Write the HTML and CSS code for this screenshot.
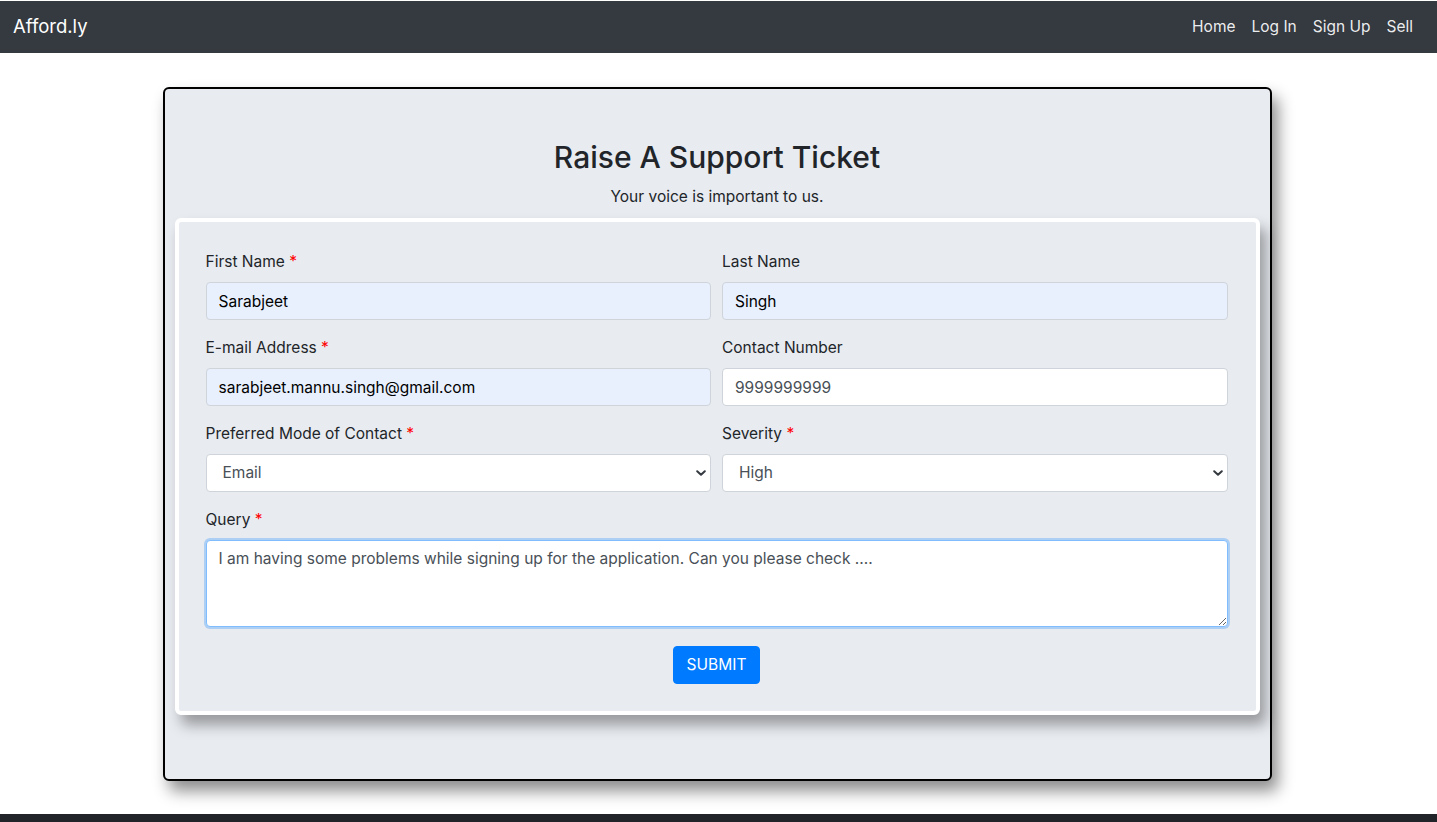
FILE: index.html
```html
<!DOCTYPE html>
<html lang="en">
<head>
<meta charset="utf-8">
<title>Afford.ly - Support</title>
<link rel="stylesheet" href="styles.css">
</head>
<body>
<nav class="navbar">
  <a class="brand" href="#">Afford.ly</a>
  <ul class="nav-links">
    <li><a href="#">Home</a></li>
    <li><a href="#">Log In</a></li>
    <li><a href="#">Sign Up</a></li>
    <li><a href="#">Sell</a></li>
  </ul>
</nav>
<main class="page">
  <section class="outer-card">
    <h2 class="title">Raise A Support Ticket</h2>
    <p class="subtitle">Your voice is important to us.</p>
    <form class="inner-card">
      <div class="form-row">
        <div class="form-group">
          <label>First Name <span class="req">*</span></label>
          <input class="form-control autofill" type="text" value="Sarabjeet">
        </div>
        <div class="form-group">
          <label>Last Name</label>
          <input class="form-control autofill" type="text" value="Singh">
        </div>
      </div>
      <div class="form-row">
        <div class="form-group">
          <label>E-mail Address <span class="req">*</span></label>
          <input class="form-control autofill" type="email" value="sarabjeet.mannu.singh@gmail.com">
        </div>
        <div class="form-group">
          <label>Contact Number</label>
          <input class="form-control muted" type="text" value="9999999999">
        </div>
      </div>
      <div class="form-row">
        <div class="form-group">
          <label>Preferred Mode of Contact <span class="req">*</span></label>
          <div class="select-wrap">
            <select class="form-control muted">
              <option>Email</option>
              <option>Phone</option>
            </select>
            <svg class="chev" width="10" height="8" viewBox="0 0 10 8"><path d="M1.2 2.2 L5 5.8 L8.8 2.2" fill="none" stroke="#343a40" stroke-width="2" stroke-linecap="round" stroke-linejoin="round"/></svg>
          </div>
        </div>
        <div class="form-group">
          <label>Severity <span class="req">*</span></label>
          <div class="select-wrap">
            <select class="form-control muted">
              <option>High</option>
              <option>Medium</option>
              <option>Low</option>
            </select>
            <svg class="chev" width="10" height="8" viewBox="0 0 10 8"><path d="M1.2 2.2 L5 5.8 L8.8 2.2" fill="none" stroke="#343a40" stroke-width="2" stroke-linecap="round" stroke-linejoin="round"/></svg>
          </div>
        </div>
      </div>
      <div class="form-group full">
        <label>Query <span class="req">*</span></label>
        <textarea class="form-control muted focused" rows="3">I am having some problems while signing up for the application. Can you please check ....</textarea>
      </div>
      <div class="actions">
        <button type="button" class="btn">SUBMIT</button>
      </div>
    </form>
  </section>
</main>
<footer class="footer"></footer>
</body>
</html>
```

FILE: styles.css
```css
* { box-sizing: border-box; }
html, body { margin: 0; padding: 0; }
body {
  font-family: Inter, "Noto Sans", "Liberation Sans", sans-serif;
  font-size: 16px;
  line-height: 1.5;
  color: #212529;
  background: #fff;
  min-height: 822px;
  display: flex;
  flex-direction: column;
}
.navbar {
  margin-top: 1px;
  height: 52px;
  background: #343a40;
  display: flex;
  align-items: center;
  justify-content: space-between;
  padding: 0 16px 0 13px;
}
.brand {
  color: #fff;
  font-size: 18.5px;
  text-decoration: none;
}
.nav-links {
  list-style: none;
  margin: 0;
  padding: 0;
  display: flex;
}
.nav-links a {
  display: block;
  padding: 8px;
  color: rgba(255,255,255,0.92);
  text-decoration: none;
  font-size: 15.5px;
}
.page {
  flex: 1;
  padding-top: 34px;
  display: flex;
  justify-content: center;
  align-items: flex-start;
}
.outer-card {
  width: 1109px;
  height: 694px;
  margin-left: -3px;
  background: #e8ebf0;
  border: 2px solid #000;
  border-radius: 6px;
  box-shadow: 6px 10px 16px rgba(0,0,0,0.45);
  padding: 50px 10px 0;
}
.title {
  margin: 0 0 10px;
  text-align: center;
  font-size: 30px;
  font-weight: 500;
  line-height: 1.2;
  color: #212529;
}
.subtitle {
  margin: 0 0 10px;
  text-align: center;
  font-size: 15.5px;
}
.inner-card {
  background: #e8ebf0;
  border: 4px solid #fff;
  border-radius: 6px;
  box-shadow: 6px 10px 14px rgba(0,0,0,0.35);
  padding: 28px 28px 27px 27px;
}
.form-row {
  display: flex;
  gap: 11px;
}
.form-group {
  flex: 1;
  margin-bottom: 16px;
  min-width: 0;
}
.form-group label {
  display: block;
  margin-bottom: 8px;
  font-size: 15.5px;
  line-height: 24px;
}
.req { color: #ff0000; }
.form-control {
  display: block;
  width: 100%;
  height: 38px;
  padding: 6px 12px;
  font-family: inherit;
  font-size: 15.5px;
  line-height: 24px;
  color: #495057;
  background: #fff;
  border: 1px solid #ced4da;
  border-radius: 4px;
  outline: none;
}
.form-control.autofill {
  background: #e8f0fe;
  color: #000;
}
.form-control.muted { color: #495057; }
.select-wrap { position: relative; }
select.form-control {
  -webkit-appearance: none;
  appearance: none;
  padding-left: 16px;
}
.chev {
  position: absolute;
  right: 5px;
  top: 15px;
  pointer-events: none;
}
textarea.form-control {
  height: 87px;
  resize: vertical;
}
textarea.focused {
  border-color: #80bdff;
  box-shadow: 0 0 0 2px rgba(0,123,255,0.25);
}
.actions {
  display: flex;
  justify-content: center;
  padding-top: 3px;
}
.btn {
  height: 38px;
  padding: 6px 13px;
  background: #007bff;
  color: #fff;
  border: 1px solid #007bff;
  border-radius: 4px;
  font-family: inherit;
  font-size: 15.5px;
  line-height: 24px;
}
.footer {
  height: 8px;
  background: #212529;
  margin-top: auto;
}
```
